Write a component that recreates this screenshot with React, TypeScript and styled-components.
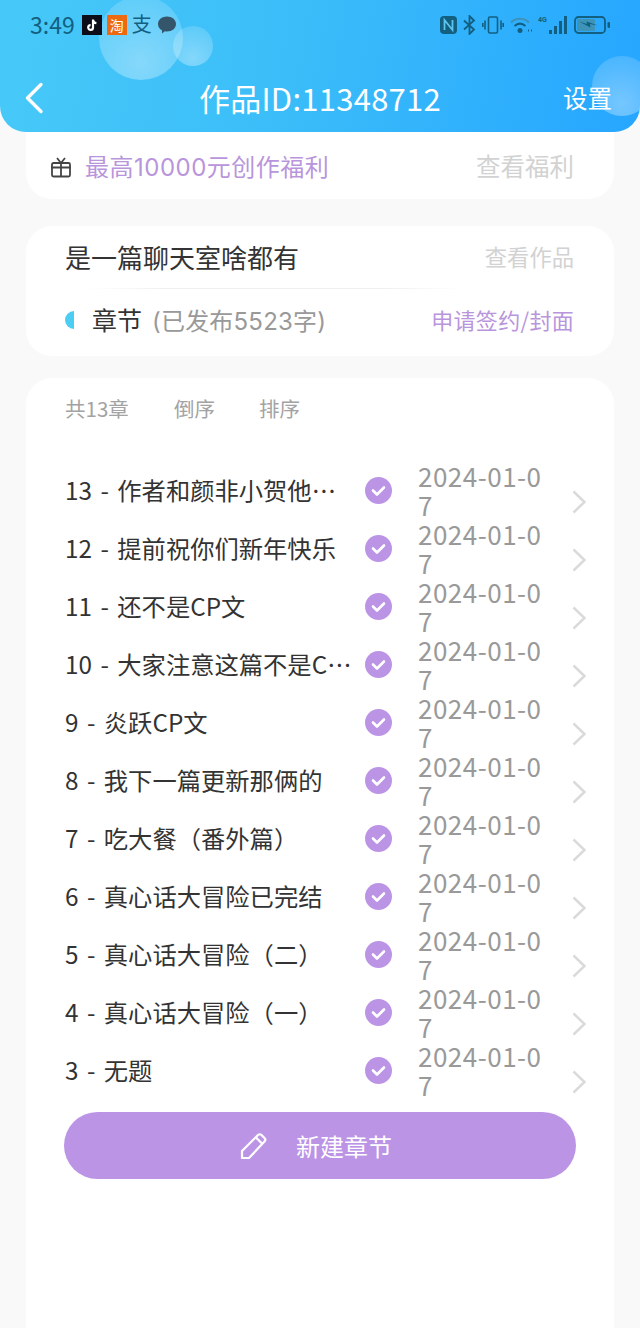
import styled, { createGlobalStyle } from "styled-components";

const GlobalStyle = createGlobalStyle`
    html, body {
        margin: 0;
        padding: 0;
        background: #f9f9f9;
    }
    body {
        font-family: "Noto Sans CJK SC", "Noto Sans", sans-serif;
    }
`;

const Page = styled.div`
    width: 640px;
    height: 1328px;
    overflow: hidden;
    display: flex;
    flex-direction: column;
    background: #f9f9f9;
`;

const Header = styled.header`
    position: relative;
    z-index: 2;
    height: 132px;
    flex: none;
    box-sizing: border-box;
    overflow: hidden;
    border-radius: 0 0 26px 26px;
    background: linear-gradient(100deg, #47c9f8 0%, #3bbdf9 45%, #26a6ff 100%);
`;

const Bubble = styled.span<{ $size: number; $left: number; $top: number }>`
    position: absolute;
    left: ${(p) => p.$left}px;
    top: ${(p) => p.$top}px;
    width: ${(p) => p.$size}px;
    height: ${(p) => p.$size}px;
    border-radius: 50%;
    background: radial-gradient(circle at 50% 80%, rgba(255, 255, 255, 0.36), rgba(255, 255, 255, 0.12));
`;

const StatusBar = styled.div`
    position: relative;
    height: 50px;
    display: flex;
    align-items: center;
    justify-content: space-between;
    padding: 0 30px;
    color: #135f80;
`;

const StatusLeft = styled.div`
    display: flex;
    align-items: center;
    gap: 5px;
`;

const StatusRight = styled.div`
    display: flex;
    align-items: center;
    gap: 6px;
`;

const Time = styled.span`
    font-size: 23px;
    line-height: 48px;
    margin: -2px 2px 0 0;
`;

const AppBadge = styled.span<{ $bg: string }>`
    width: 20px;
    height: 20px;
    display: flex;
    align-items: center;
    justify-content: center;
    background: ${(p) => p.$bg};
    color: #fff;
    font-size: 14px;
    line-height: 20px;
`;

const AppGlyph = styled.span`
    width: 20px;
    text-align: center;
    font-family: "Liberation Serif", "Noto Sans CJK SC", serif;
    font-size: 20px;
    line-height: 20px;
`;

const Nav = styled.nav`
    position: relative;
    height: 44px;
    margin-top: 26px;
    display: grid;
    grid-template-columns: 1fr auto 1fr;
    align-items: center;
    padding: 0 28px;
    color: #fff;
`;

const BackIcon = styled.svg`
    margin-left: -4px;
`;

const NavTitle = styled.h1`
    margin: 0;
    font-size: 31px;
    font-weight: 400;
    letter-spacing: 0.25px;
    line-height: 44px;
`;

const NavAction = styled.span`
    justify-self: end;
    font-size: 24.5px;
    line-height: 44px;
`;

const Card = styled.section`
    margin: 0 26px;
    background: #fff;
    border-radius: 26px;
`;

const BenefitCard = styled(Card)`
    height: 67px;
    flex: none;
    box-sizing: border-box;
    display: flex;
    align-items: center;
    padding: 2px 40px 0 24px;
    border-radius: 0 0 26px 26px;
`;

const BenefitText = styled.span`
    margin: 0 0 3px 13px;
    color: #b995dc;
    font-family: Inter, "Noto Sans CJK SC", sans-serif;
    font-size: 24px;
    letter-spacing: 0.5px;
`;

const MutedLink = styled.span<{ $size: number }>`
    margin: 0 0 3px auto;
    color: #d2d2d2;
    font-size: ${(p) => p.$size}px;
`;

const WorkCard = styled(Card)`
    margin-top: 27px;
    height: 130px;
    flex: none;
    padding: 0 40px 0 39px;
`;

const WorkRow = styled.div<{ $height: number }>`
    height: ${(p) => p.$height}px;
    display: flex;
    align-items: center;
`;

const WorkTitle = styled.span`
    margin-bottom: 2px;
    color: #333;
    font-size: 26px;
`;

const Divider = styled.div`
    height: 1px;
    margin: 0 110px 0 20px;
    background: linear-gradient(90deg, #fff, #f0f0f0 20%, #f0f0f0 80%, #fff);
`;

const SectionDot = styled.span`
    width: 9px;
    height: 18px;
    margin-top: 2px;
    border-radius: 9px 0 0 9px;
    background: #4bcdf4;
`;

const SectionName = styled.span`
    margin-left: 18px;
    color: #333;
    font-size: 25px;
`;

const SectionCount = styled.span`
    margin-left: 10px;
    color: #999;
    font-family: Inter, "Noto Sans CJK SC", sans-serif;
    font-size: 24px;
    letter-spacing: 0.2px;
`;

const ApplyLink = styled.span`
    margin-left: auto;
    color: #b995dc;
    font-size: 22px;
    letter-spacing: 0.3px;
`;

const ChapterCard = styled(Card)`
    margin-top: 22px;
    flex: 1;
    padding-top: 16px;
    border-radius: 26px 26px 0 0;
`;

const Toolbar = styled.div`
    height: 28px;
    display: flex;
    align-items: center;
    padding-left: 39px;
    color: #a3a3a3;
    font-size: 20.5px;
`;

const ToolItem = styled.span<{ $width: number }>`
    width: ${(p) => p.$width}px;
`;

const ChapterList = styled.ul`
    list-style: none;
    margin: 39px 0 0;
    padding: 0 28px 0 39px;
    height: 636px;
    overflow: hidden;
`;

const ChapterRow = styled.li`
    height: 58px;
    display: flex;
    align-items: center;
`;

const ChapterTitle = styled.span`
    width: 288px;
    flex: none;
    overflow: hidden;
    white-space: nowrap;
    text-overflow: ellipsis;
    color: #333;
    font-size: 24.3px;
    word-spacing: 3px;
    line-height: 60px;
`;

const CheckBadge = styled.svg`
    width: 27px;
    height: 27px;
    flex: none;
    margin-left: 12px;
`;

const ChapterDate = styled.span`
    width: 128px;
    flex: none;
    margin-left: 26px;
    word-break: break-all;
    color: #999;
    font-size: 26px;
    letter-spacing: 0.5px;
    line-height: 29px;
`;

const Chevron = styled.svg`
    width: 14px;
    height: 24px;
    flex: none;
    margin: 24px 0 0 26px;
`;

const NewButton = styled.button`
    display: flex;
    align-items: center;
    justify-content: center;
    width: 512px;
    height: 67px;
    margin: 15px 0 0 38px;
    padding: 0 8px 0 0;
    border: 0;
    border-radius: 34px;
    background: #bc94e6;
    color: #fff;
    font-family: inherit;
    font-size: 24px;
`;

const ButtonLabel = styled.span`
    margin-left: 28px;
`;

const chapters = [
    "13 - 作者和颜非小贺他们的番外",
    "12 - 提前祝你们新年快乐",
    "11 - 还不是CP文",
    "10 - 大家注意这篇不是CP文哈",
    "9 - 炎跃CP文",
    "8 - 我下一篇更新那俩的",
    "7 - 吃大餐（番外篇）",
    "6 - 真心话大冒险已完结",
    "5 - 真心话大冒险（二）",
    "4 - 真心话大冒险（一）",
    "3 - 无题",
];

const App = () => {
    return (
        <>
            <GlobalStyle />
            <Page>
                <Header>
                    <Bubble $size={84} $left={99} $top={-4} />
                    <Bubble $size={40} $left={173} $top={26} />
                    <Bubble $size={60} $left={592} $top={56} />
                    <StatusBar>
                        <StatusLeft>
                            <Time>3:49</Time>
                            <AppBadge $bg="#0d0d1a">
                                <svg width="14" height="14" viewBox="0 0 14 14" fill="none">
                                    <path d="M8 1.5v8a2.4 2.4 0 1 1-2.4-2.4M8 2c.4 2 1.6 3 3.4 3.2" stroke="#fff" strokeWidth="2.2" />
                                </svg>
                            </AppBadge>
                            <AppBadge $bg="#ee6a10">淘</AppBadge>
                            <AppGlyph>支</AppGlyph>
                            <svg width="20" height="20" viewBox="0 0 20 20">
                                <path d="M10 1.5c5 0 9 3 9 7.5s-4 7.5-9 7.5c-.8 0-1.5-.1-2.2-.2L5 18.5v-3.2C2.5 14 1 11.7 1 9c0-4.5 4-7.5 9-7.5z" fill="#35566a" />
                            </svg>
                        </StatusLeft>
                        <StatusRight>
                            <svg width="17" height="18" viewBox="0 0 17 18" fill="none">
                                <rect x="0" y="0" width="17" height="18" rx="4" fill="#135f80" />
                                <path d="M4.5 14V4l8 10V4" stroke="#5cc4ee" strokeWidth="1.8" />
                            </svg>
                            <svg width="13" height="20" viewBox="0 0 13 20" fill="none">
                                <path d="M1 5.5l10 9L6.5 19V1L11 5.5l-10 9" stroke="#135f80" strokeWidth="1.8" />
                            </svg>
                            <svg width="22" height="18" viewBox="0 0 22 18" fill="none" stroke="#135f80" strokeWidth="1.6">
                                <rect x="6.5" y="1" width="9" height="16" rx="1.5" />
                                <path d="M3 4.5v9M.8 7v4M19 4.5v9M21.2 7v4" />
                            </svg>
                            <svg width="22" height="18" viewBox="0 0 22 18" fill="none" strokeWidth="2">
                                <path d="M1 6.5C6 1.5 14 1.5 19 6.5" stroke="#3d93b8" />
                                <path d="M4.5 10c3.5-3 7.5-3 11 0" stroke="#135f80" />
                                <circle cx="10" cy="14.5" r="2.5" fill="#135f80" />
                                <path d="M18 14.5h1M21 14.5h1" stroke="#135f80" />
                            </svg>
                            <svg width="30" height="18" viewBox="0 0 30 18" fill="#135f80">
                                <text x="0" y="6" fontSize="7" fontWeight="700" fontFamily="Roboto, sans-serif">4G</text>
                                <rect x="11" y="14" width="3" height="4" />
                                <rect x="16" y="10" width="3" height="8" />
                                <rect x="21" y="5" width="3" height="13" />
                                <rect x="26" y="0" width="3" height="18" />
                            </svg>
                            <svg width="36" height="18" viewBox="0 0 36 18" fill="none">
                                <rect x="1" y="1" width="30" height="16" rx="3.5" stroke="#135f80" strokeWidth="1.8" />
                                <rect x="3" y="3" width="18" height="12" rx="1.5" fill="#3d93b8" />
                                <path d="M5 5.5l8 2.5-.5-2.5L24 9.500l-8-1.500.5 3.500z" fill="#135f80" />
                                <rect x="33.5" y="6" width="2.5" height="6" rx="1.2" fill="#135f80" />
                            </svg>
                        </StatusRight>
                    </StatusBar>
                    <Nav>
                        <BackIcon width="20" height="32" viewBox="0 0 20 32" fill="none">
                            <path d="M17 2.5L3.5 16 17 29.5" stroke="#fff" strokeWidth="3.4" strokeLinecap="round" strokeLinejoin="round" />
                        </BackIcon>
                        <NavTitle>作品ID:11348712</NavTitle>
                        <NavAction>设置</NavAction>
                    </Nav>
                </Header>

                <BenefitCard>
                    <svg width="22" height="22" viewBox="0 0 22 22" fill="none" stroke="#444" strokeWidth="1.8">
                        <rect x="2" y="7" width="18" height="13.5" rx="1.5" />
                        <path d="M1 11.5h20M11 7v13.5M11 7L7 2M11 7l4-5" />
                    </svg>
                    <BenefitText>最高10000元创作福利</BenefitText>
                    <MutedLink $size={24.5}>查看福利</MutedLink>
                </BenefitCard>

                <WorkCard>
                    <WorkRow $height={62}>
                        <WorkTitle>是一篇聊天室啥都有</WorkTitle>
                        <MutedLink $size={22.3}>查看作品</MutedLink>
                    </WorkRow>
                    <Divider />
                    <WorkRow $height={60}>
                        <SectionDot />
                        <SectionName>章节</SectionName>
                        <SectionCount>(已发布5523字)</SectionCount>
                        <ApplyLink>申请签约/封面</ApplyLink>
                    </WorkRow>
                </WorkCard>

                <ChapterCard>
                    <Toolbar>
                        <ToolItem $width={109}>共13章</ToolItem>
                        <ToolItem $width={85}>倒序</ToolItem>
                        <ToolItem $width={60}>排序</ToolItem>
                    </Toolbar>
                    <ChapterList>
                        {chapters.map((title) => (
                            <ChapterRow key={title}>
                                <ChapterTitle>{title}</ChapterTitle>
                                <CheckBadge viewBox="0 0 27 27">
                                    <circle cx="13.5" cy="13.5" r="13.5" fill="#bc94e6" />
                                    <path d="M8 13.5l4 4 7-7" fill="none" stroke="#fff" strokeWidth="2.6" strokeLinecap="round" strokeLinejoin="round" />
                                </CheckBadge>
                                <ChapterDate>2024-01-07</ChapterDate>
                                <Chevron viewBox="0 0 14 24" fill="none">
                                    <path d="M1.5 1.5L12.5 12 1.5 22.5" stroke="#dadada" strokeWidth="2.5" />
                                </Chevron>
                            </ChapterRow>
                        ))}
                    </ChapterList>
                    <NewButton>
                        <svg width="28" height="28" viewBox="0 0 28 28" fill="none" stroke="#fff" strokeWidth="2.2" strokeLinejoin="round">
                            <path d="M2 26v-7L18 3c1-1 2.5-1 3.5 0l3 3c1 1 1 2.5 0 3.5L9 26z" />
                            <path d="M16 5.5l6.5 6.5" />
                        </svg>
                        <ButtonLabel>新建章节</ButtonLabel>
                    </NewButton>
                </ChapterCard>
            </Page>
        </>
    );
};

export default App;
